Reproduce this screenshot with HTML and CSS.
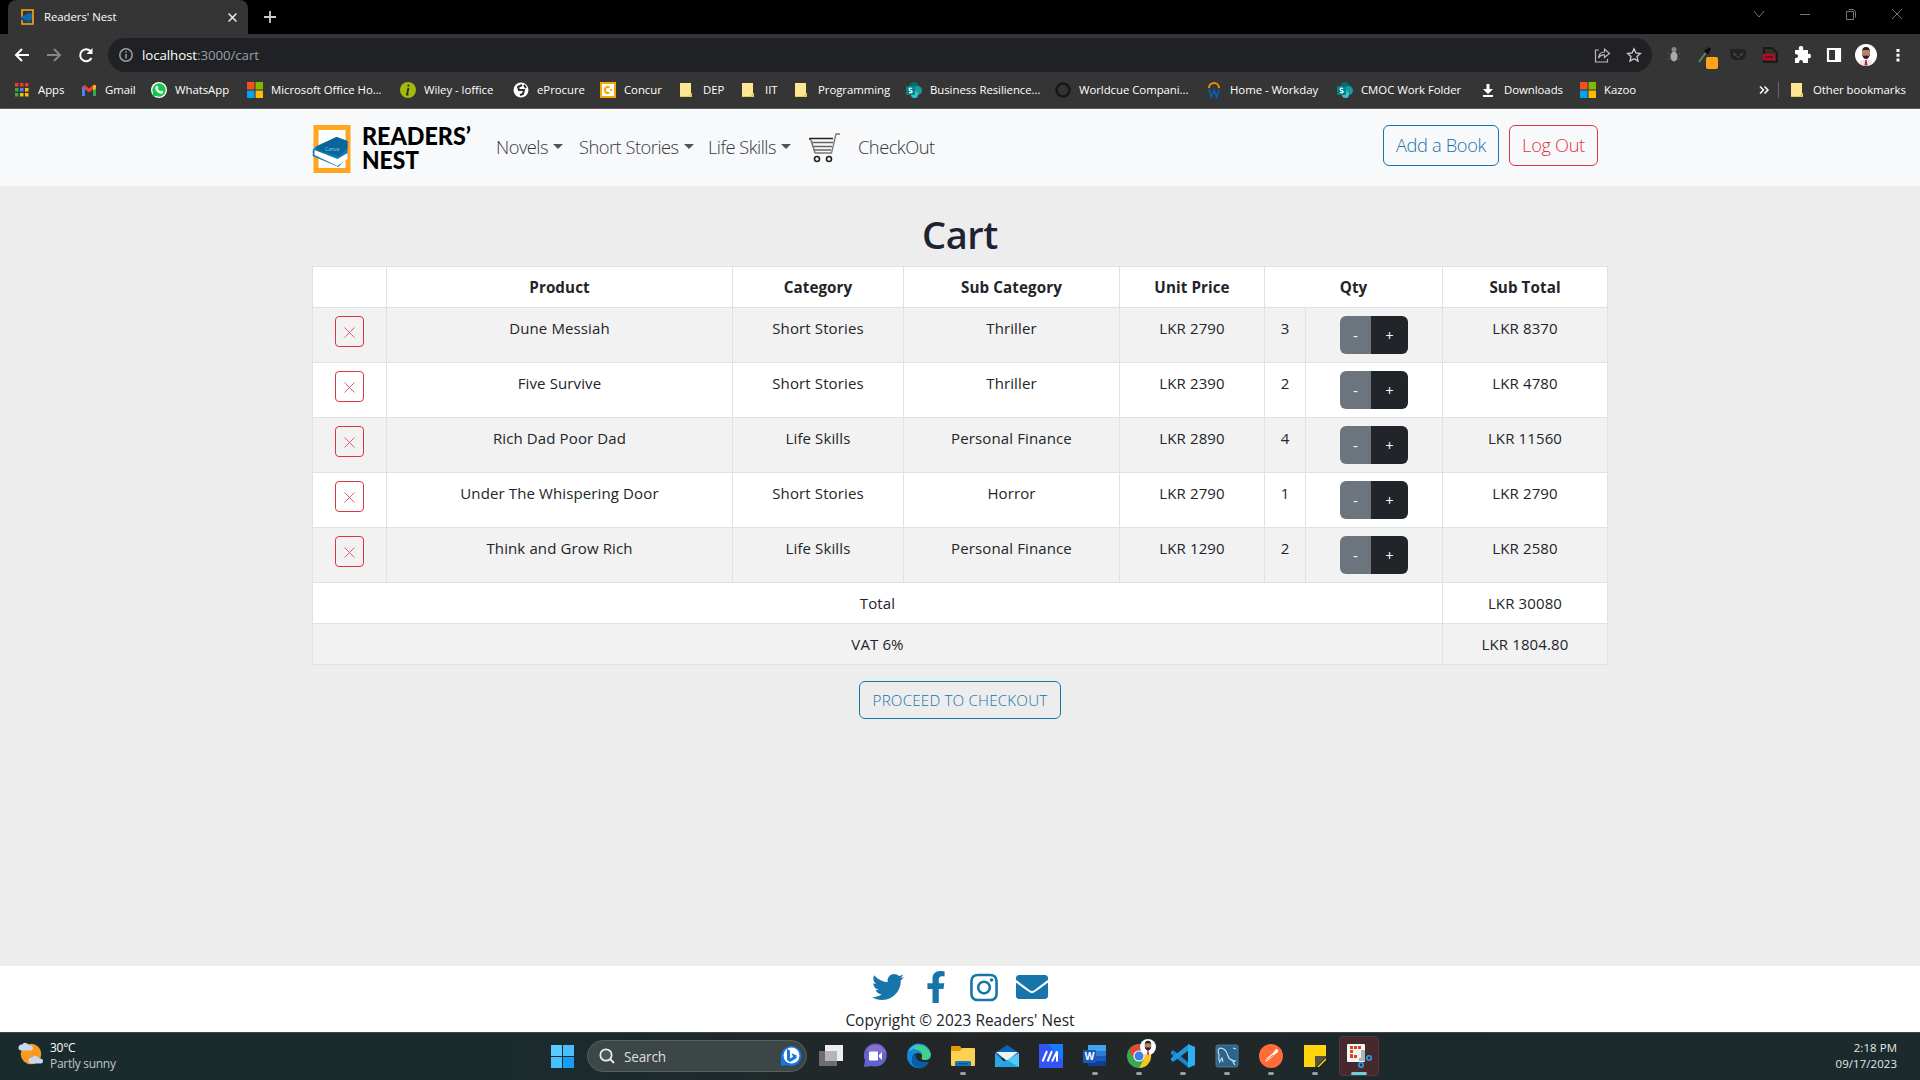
FILE: index.html
```html
<!DOCTYPE html>
<html lang="en">
<head>
<meta charset="utf-8">
<title>Readers' Nest</title>
<link rel="stylesheet" href="styles.css">
</head>
<body>
<svg class="defs" width="0" height="0">
  <defs>
    <symbol id="folder" viewBox="0 0 12 16"><path fill="#ffe694" d="M0 1h11v10h1v4H0z"/><path fill="#e8c95c" d="M0 14h9v-3h3v4H0z"/><path fill="#ffe694" d="M1 2h9v11H1z"/></symbol>
    <symbol id="ms" viewBox="0 0 15 15"><path fill="#f25022" d="M0 0h7v7H0z"/><path fill="#7fba00" d="M8 0h7v7H8z"/><path fill="#00a4ef" d="M0 8h7v7H0z"/><path fill="#ffb900" d="M8 8h7v7H8z"/></symbol>
    <symbol id="sp" viewBox="0 0 16 16"><circle cx="8" cy="5" r="5" fill="#036c70"/><circle cx="11.5" cy="8.500" r="4.500" fill="#1a9ba1"/><circle cx="8.500" cy="12.500" r="3.500" fill="#37c6d0"/><rect y="4" width="9" height="9" rx="1" fill="#038387"/><path d="M6.200 6.500q-3-1-3 .8 0 1 1.500 1.300t1.300 1.200q-.3 1.400-3 .6" fill="none" stroke="#fff" stroke-width="1.300"/></symbol>
    <symbol id="logo" viewBox="0 0 39 48"><path d="M3.500 2.500h32v43h-32z" fill="#fff" stroke="#ffa51f" stroke-width="5"/><path fill="#0c7cb8" d="M0 25l4-4 20-9 11 4v16l-9 10L0 31z"/><path fill="#fff" d="M2 25l23 9 10-6v6l-10 7-23-11z"/><path fill="#0a659b" d="M4 22l20-10 11 4v7l-9 8-22-6z"/></symbol>
    <symbol id="person" viewBox="0 0 22 22"><circle cx="11" cy="11" r="11" fill="#fff"/><path fill="#e9e4e6" d="M4 19q2-4 7-4t7 4q-7 5-14 0"/><path fill="#c61b3c" d="M10.300 16h1.400l.8 5.500h-3z"/><ellipse cx="11" cy="9" rx="4" ry="5.500" fill="#b98066"/><path fill="#28201f" d="M7 8q0-5 4-5t4 5l-1-2H8zM7 10q1 5 4 5t4-5l-1.500 2-2.500-.5-2.500.5z"/></symbol>
  </defs>
</svg>

<header class="browser">
  <div class="tabstrip">
    <div class="tab">
      <svg class="fav" viewBox="0 0 13 16"><path d="M1 1h11v14H1z" fill="none" stroke="#ffa51f" stroke-width="1.600"/><path fill="#0c6da8" d="M0 8l8-4 3 1v6l-3 3-8-3z"/><path d="M0 10l8 2.500 3-2" fill="none" stroke="#353535" stroke-width="1"/></svg>
      <span class="tab-title">Readers' Nest</span>
      <svg class="tab-x" viewBox="0 0 8 8"><path d="M.5.5l7 7M7.500.5l-7 7" stroke="#eee" stroke-width="1.300"/></svg>
    </div>
    <svg class="plus" viewBox="0 0 12 12"><path d="M6 0v12M0 6h12" stroke="#ccc" stroke-width="1.800"/></svg>
    <div class="controls">
      <svg viewBox="0 0 12 12"><path d="M1 3l5 6 5-6"/></svg>
      <svg viewBox="0 0 12 12"><path d="M1 6.500h10"/></svg>
      <svg viewBox="0 0 12 12"><path d="M1.500 3.500h7v8h-7zM3.500 1.500h5l2 2v6"/></svg>
      <svg viewBox="0 0 12 12"><path d="M1 1l10 10M11 1L1 11"/></svg>
    </div>
  </div>

  <div class="toolbar">
    <div class="navs">
      <svg viewBox="0 0 16 16"><path d="M15 8H2M8 2L2 8l6 6" stroke="#fff"/></svg>
      <svg viewBox="0 0 16 16"><path d="M1 8h13M8 2l6 6-6 6" stroke="#868686"/></svg>
      <svg viewBox="0 0 16 16"><path d="M13.500 11A6 6 0 1 1 12.500 4" stroke="#fff"/><path d="M14.500 1v6h-6z" fill="#fff"/></svg>
    </div>
    <div class="omnibox">
      <svg class="info" viewBox="0 0 14 14"><circle cx="7" cy="7" r="6.200" fill="none" stroke="#9aa0a6" stroke-width="1.500"/><path d="M7 6v4.500M7 3.300v1.500" stroke="#9aa0a6" stroke-width="1.500"/></svg>
      <span class="url">localhost<i>:3000/cart</i></span>
      <svg class="ob-icon" viewBox="0 0 16 16"><path d="M5 3H1.500v12h12v-3M4.500 11q.5-6 6-6V2l5 4.500-5 4V8q-4-.5-6 3z" fill="none" stroke="#bbb" stroke-width="1.200"/></svg>
      <svg class="ob-icon" viewBox="0 0 16 16"><path d="M8 1.800l1.900 4.200 4.500.5-3.400 3 1 4.600-4-2.400-4 2.400 1-4.600-3.400-3 4.500-.5z" fill="none" stroke="#ccc" stroke-width="1.300"/></svg>
    </div>
    <div class="exts">
      <svg viewBox="0 0 20 20"><ellipse cx="10" cy="11.500" rx="3.500" ry="5" fill="#aaa"/><circle cx="10" cy="4.500" r="2.500" fill="#888"/><path d="M4 8l3 2M16 8l-3 2M4 15l3-2M16 15l-3-2" stroke="#565656"/></svg>
      <svg viewBox="0 0 20 20"><path d="M3 17L11 6" stroke="#4b9b64" stroke-width="1.600"/><path d="M9 5l4 3M10 8l4-5" stroke="#0c0c0c" stroke-width="3"/><rect x="10" y="12" width="12" height="12" rx="2" fill="#ffa31a"/></svg>
      <svg viewBox="0 0 20 20"><path d="M2 6q0-2 2-2h12q2 0 2 2 0 9-5 9H7q-5 0-5-9" fill="#222"/><path d="M5 7l4 3-3 1zM15 7l-4 3 3 1z" fill="#4a4a4a"/><path d="M8 12h4" stroke="#4a4a4a"/></svg>
      <svg viewBox="0 0 20 20"><path d="M4 3h8l5 5v9H4z" fill="#353030" stroke="#241616" stroke-width="2"/><path fill="#b80c25" d="M3 9h12v6H3z"/><path d="M5 12h8" stroke="#4c1420" stroke-width="1.500"/></svg>
      <svg viewBox="0 0 20 20"><path fill="#fff" d="M3 5h4q-1-4 2-4t2 4h5v4q3-1 3 2t-3 2v5h-5q0-3-2-3t-2 3H3v-5q3 0 3-2t-3-2z"/></svg>
      <svg viewBox="0 0 20 20"><path d="M4 4h12v12H4z" fill="none" stroke="#fff" stroke-width="2.200"/><path fill="#fff" d="M11 3h6v14h-6z"/></svg>
      <svg class="me" viewBox="0 0 22 22"><use href="#person"/></svg>
      <svg viewBox="0 0 20 20"><path fill="#fff" d="M8.500 4h3v3h-3zM8.500 8.800h3v3h-3zM8.500 13.600h3v3h-3z"/></svg>
    </div>
  </div>

  <nav class="bookmarks">
    <a class="bm" style="width:67px"><svg viewBox="0 0 14 16"><path fill="#ee3b2f" d="M0 1h3.500v3.500H0zM5 1h3.500v3.500H5zM10 1h3.500v3.500H10z"/><path fill="#34a853" d="M0 6h3.500v3.500H0zM0 11h3.500v3.500H0z"/><path fill="#4285f4" d="M5 6h3.500v3.500H5z"/><path fill="#fbbc04" d="M10 6h3.500v3.500H10zM5 11h3.500v3.500H5zM10 11h3.500v3.500H10z"/></svg>Apps</a>
    <a class="bm" style="width:70px"><svg viewBox="0 0 16 16"><path fill="#4285f4" d="M1 4l3 2v8H1z"/><path fill="#34a853" d="M12 6l3-2v10h-3z"/><path d="M2.500 4L8 8.500 13.500 4" fill="none" stroke="#ea4335" stroke-width="3"/><path fill="#fbbc04" d="M12 3.500q3-2 3 1v2l-3 2z"/></svg>Gmail</a>
    <a class="bm" style="width:96px"><svg viewBox="0 0 16 16"><circle cx="8" cy="8" r="8" fill="#fff"/><path fill="#16c64d" d="M1.500 14.500L2 11a6.700 6.700 0 1 1 3 3z"/><path fill="#fff" d="M5 4l1.500-.3L7.500 6l-.8 1 2.500 2.300 1-.8 2.200 1q-.4 2.500-2.400 2.300Q5 10.500 4.200 6z"/></svg>WhatsApp</a>
    <a class="bm" style="width:153px"><svg viewBox="0 0 15 15"><use href="#ms"/></svg>Microsoft Office Ho...</a>
    <a class="bm" style="width:113px"><svg viewBox="0 0 16 16"><circle cx="8" cy="8" r="8" fill="#a3b90b"/><path d="M8.500 2.500v2M8.500 6L7 12.500h1.500" stroke="#263014" stroke-width="1.800" fill="none"/></svg>Wiley - loffice</a>
    <a class="bm" style="width:87px"><svg viewBox="0 0 16 16"><circle cx="8" cy="8" r="7.500" fill="#fff"/><path d="M9 3L5 5l1 3h5l-1 4-3 1M11 3l2 3" fill="none" stroke="#2b3034" stroke-width="2"/></svg>eProcure</a>
    <a class="bm" style="width:80px"><svg viewBox="0 0 16 16"><path fill="#fff" stroke="#f5a800" stroke-width="2" d="M1 1h14v14H1z"/><path d="M9.500 5.500a3 3 0 1 0 0 5" fill="none" stroke="#f5a800" stroke-width="2"/><path fill="#f5a800" d="M10 7h2v2h-2z"/></svg>Concur</a>
    <a class="bm f" style="width:62px"><svg viewBox="0 0 12 16"><use href="#folder"/></svg>DEP</a>
    <a class="bm f" style="width:53px"><svg viewBox="0 0 12 16"><use href="#folder"/></svg>IIT</a>
    <a class="bm f" style="width:111px"><svg viewBox="0 0 12 16"><use href="#folder"/></svg>Programming</a>
    <a class="bm" style="width:149px"><svg viewBox="0 0 16 16"><use href="#sp"/></svg>Business Resilience...</a>
    <a class="bm" style="width:151px"><svg viewBox="0 0 16 16"><circle cx="8" cy="8" r="6.500" fill="#333" stroke="#171717" stroke-width="2.500"/></svg>Worldcue Compani...</a>
    <a class="bm" style="width:131px"><svg viewBox="0 0 16 16"><path d="M3 6a5 5 0 0 1 10 0" fill="none" stroke="#f38b00" stroke-width="2"/><path d="M3 7l2.200 8L8 8.500l2.800 6.500L13 7" fill="none" stroke="#0b5cad" stroke-width="1.800"/></svg>Home - Workday</a>
    <a class="bm" style="width:143px"><svg viewBox="0 0 16 16"><use href="#sp"/></svg>CMOC Work Folder</a>
    <a class="bm" style="width:100px"><svg viewBox="0 0 16 16"><path fill="#fff" d="M6.500 2h3v5H13l-5 5-5-5h3.500zM3 13h10v2H3z"/></svg>Downloads</a>
    <a class="bm" style="width:60px"><svg viewBox="0 0 15 15"><use href="#ms"/></svg>Kazoo</a>
    <span class="more"><svg viewBox="0 0 10 8"><path d="M1 .5L4.500 4 1 7.500M5.500.5L9 4 5.500 7.500" fill="none" stroke="#fff" stroke-width="1.500"/></svg></span>
    <a class="bm f other"><svg viewBox="0 0 12 16"><use href="#folder"/></svg>Other bookmarks</a>
  </nav>
</header>

<section class="page">
  <nav class="navbar">
    <a class="brand">
      <svg width="160" height="48" viewBox="0 0 160 48"><svg width="40" height="48" viewBox="0 0 39 48"><use href="#logo"/></svg>
        <text class="canva" x="13" y="26">Canva</text>
        <text class="wordmark" x="50" y="20" textLength="109" lengthAdjust="spacingAndGlyphs">READERS’</text>
        <text class="wordmark" x="50" y="44" textLength="57" lengthAdjust="spacingAndGlyphs">NEST</text></svg>
    </a>
    <a class="link dd" style="width:83px">Novels</a>
    <a class="link dd" style="width:129px">Short Stories</a>
    <a class="link dd" style="width:100px">Life Skills</a>
    <svg class="cart" viewBox="0 0 32 30"><g fill="none" stroke="#222" stroke-width="1.600"><path d="M1 7V5.500h23"/><path d="M31 1h-4L22.500 20H6" stroke="#777" stroke-width="1.300"/><path d="M3 9.500h21M4 13.500h19M5 17h17" stroke="#666"/><path d="M2 7l4 13" stroke="#777"/><circle cx="8" cy="26" r="2.500"/><circle cx="20" cy="26" r="2.500"/></g></svg>
    <a class="link co">CheckOut</a>
    <div class="actions">
      <button class="btn add">Add a Book</button>
      <button class="btn out">Log Out</button>
    </div>
  </nav>

  <main>
    <h1>Cart</h1>
    <table>
      <colgroup><col class="c1"><col class="c2"><col class="c3"><col class="c4"><col class="c5"><col class="c6"><col class="c7"><col class="c8"></colgroup>
      <thead><tr><th></th><th>Product</th><th>Category</th><th>Sub Category</th><th>Unit Price</th><th colspan="2">Qty</th><th>Sub Total</th></tr></thead>
      <tbody>
        <tr class="item"><td><button class="del"><svg viewBox="0 0 11 11"><path d="M.5.5l10 10M10.500.5l-10 10"/></svg></button></td><td>Dune Messiah</td><td>Short Stories</td><td>Thriller</td><td>LKR 2790</td><td>3</td><td><div class="qty"><button>-</button><button>+</button></div></td><td>LKR 8370</td></tr>
        <tr class="item"><td><button class="del"><svg viewBox="0 0 11 11"><path d="M.5.5l10 10M10.500.5l-10 10"/></svg></button></td><td>Five Survive</td><td>Short Stories</td><td>Thriller</td><td>LKR 2390</td><td>2</td><td><div class="qty"><button>-</button><button>+</button></div></td><td>LKR 4780</td></tr>
        <tr class="item"><td><button class="del"><svg viewBox="0 0 11 11"><path d="M.5.5l10 10M10.500.5l-10 10"/></svg></button></td><td>Rich Dad Poor Dad</td><td>Life Skills</td><td>Personal Finance</td><td>LKR 2890</td><td>4</td><td><div class="qty"><button>-</button><button>+</button></div></td><td>LKR 11560</td></tr>
        <tr class="item"><td><button class="del"><svg viewBox="0 0 11 11"><path d="M.5.5l10 10M10.500.5l-10 10"/></svg></button></td><td>Under The Whispering Door</td><td>Short Stories</td><td>Horror</td><td>LKR 2790</td><td>1</td><td><div class="qty"><button>-</button><button>+</button></div></td><td>LKR 2790</td></tr>
        <tr class="item"><td><button class="del"><svg viewBox="0 0 11 11"><path d="M.5.5l10 10M10.500.5l-10 10"/></svg></button></td><td>Think and Grow Rich</td><td>Life Skills</td><td>Personal Finance</td><td>LKR 1290</td><td>2</td><td><div class="qty"><button>-</button><button>+</button></div></td><td>LKR 2580</td></tr>
        <tr><td colspan="7">Total</td><td>LKR 30080</td></tr>
        <tr><td colspan="7">VAT 6%</td><td>LKR 1804.80</td></tr>
      </tbody>
    </table>
    <button class="proceed">PROCEED TO CHECKOUT</button>
  </main>

  <footer>
    <div class="social">
      <svg viewBox="0 0 512 512"><path d="M459.370 151.716c.325 4.548.325 9.097.325 13.645 0 138.720-105.583 298.558-298.558 298.558-59.452 0-114.680-17.219-161.137-47.106 8.447.974 16.568 1.299 25.340 1.299 49.055 0 94.213-16.568 130.274-44.832-46.132-.975-84.792-31.188-98.112-72.772 6.498.974 12.995 1.624 19.818 1.624 9.421 0 18.843-1.300 27.614-3.573-48.081-9.747-84.143-51.980-84.143-102.985v-1.299c13.969 7.797 30.214 12.670 47.431 13.319-28.264-18.843-46.781-51.005-46.781-87.391 0-19.492 5.197-37.360 14.294-52.954 51.655 63.675 129.300 105.258 216.365 109.807-1.624-7.797-2.599-15.918-2.599-24.040 0-57.828 46.782-104.934 104.934-104.934 30.213 0 57.502 12.670 76.670 33.137 23.715-4.548 46.456-13.320 66.599-25.340-7.798 24.366-24.366 44.833-46.132 57.827 21.117-2.273 41.584-8.122 60.426-16.243-14.292 20.791-32.161 39.308-52.628 54.253z"/></svg>
      <svg viewBox="0 0 320 512"><path d="M279.140 288l14.220-92.660h-88.910v-60.130c0-25.350 12.420-50.060 52.240-50.060h40.420V6.260S260.430 0 225.360 0c-73.220 0-121.080 44.380-121.080 124.720v70.620H22.890V288h81.390v224h100.170V288z"/></svg>
      <svg viewBox="32 32 448 448"><path fill-rule="evenodd" d="M165 42h182q123 0 123 123v182q0 123-123 123H165Q42 470 42 347V165Q42 42 165 42zm0 40q-83 0-83 83v182q0 83 83 83h182q83 0 83-83V165q0-83-83-83zM256 146a110 110 0 1 1 0 220 110 110 0 0 1 0-220zm0 40a70 70 0 1 0 0 140 70 70 0 0 0 0-140z"/><circle cx="373" cy="139" r="27"/></svg>
      <svg viewBox="0 0 512 512"><path d="M502.300 190.800c3.900-3.100 9.700-.2 9.700 4.700V400c0 26.500-21.500 48-48 48H48c-26.500 0-48-21.500-48-48V195.600c0-5 5.700-7.800 9.700-4.700 22.400 17.400 52.100 39.500 154.100 113.600 21.100 15.400 56.700 47.800 92.200 47.600 35.700.3 72-32.800 92.300-47.600 102-74.100 131.600-96.300 154-113.700zM256 320c23.200.4 56.600-29.200 73.400-41.400 132.700-96.300 142.800-104.700 173.400-128.700 5.800-4.500 9.200-11.500 9.200-18.900v-19c0-26.500-21.500-48-48-48H48c-26.500 0-48 21.500-48 48v19c0 7.400 3.400 14.300 9.200 18.900 30.600 23.900 40.700 32.400 173.400 128.700 16.800 12.200 50.200 41.800 73.400 41.400z"/></svg>
    </div>
    <p>Copyright © 2023 Readers' Nest</p>
  </footer>
</section>

<div class="taskbar">
  <div class="weather">
    <svg viewBox="0 0 24 24"><circle cx="12" cy="12" r="10.300" fill="#f99a22"/><path fill="#c9d8f6" d="M2 8.500a3 3 0 0 1 1-6 4 4 0 0 1 7 1q4-.5 4 2.500t-3 2.500z"/><path fill="#c9d8f6" d="M12 21.500a3 3 0 0 1 1-6 4 4 0 0 1 7 1q4-.5 4 2.500t-3 2.500z"/></svg>
    <div><b>30°C</b><span>Partly sunny</span></div>
  </div>
  <div class="dock">
    <svg class="win" viewBox="0 0 23 23"><path fill="#5dcaff" d="M0 0h11v11H0z"/><path fill="#47c0fb" d="M12 0h11v11H12zM0 12h11v11H0z"/><path fill="#169ff7" d="M12 12h11v11H12z"/></svg>
    <div class="search">
      <svg viewBox="0 0 16 16"><circle cx="7" cy="7" r="5.700" fill="#4e5757" stroke="#eee" stroke-width="1.700"/><path d="M11 11l4 4" stroke="#eee" stroke-width="1.800"/></svg>
      <span>Search</span>
      <svg class="bing" viewBox="0 0 20 20"><path fill="#1676e3" d="M10 0a10 10 0 1 1-4 19L0 20V10A10 10 0 0 1 10 0"/><circle cx="10.500" cy="9.500" r="8" fill="#fff"/><path fill="#1676e3" d="M6 3l3 1.500v8l3-1.700-1.500-3.500 5 2v3L9 16l-3-2z"/></svg>
    </div>
    <div class="apps">
      <span><svg viewBox="0 0 24 24"><path fill="#eee" d="M6 1h18v16H6z"/><path fill="#777" d="M0 7h18v15H0z" opacity=".88"/><path fill="#b5b5b5" d="M6 7h12v10H6z"/></svg></span>
      <span><svg viewBox="0 0 24 24"><path fill="#6462ce" d="M1 23l1-7A11.500 11.500 0 1 1 9 22z"/><path fill="#9575cf" d="M3 7q3-6 9-6 8 0 11 8z" opacity=".7"/><rect x="6" y="7.500" width="9" height="9" rx="1" fill="#fff"/><path fill="#fff" d="M16 11l3-3v8l-3-3z"/></svg></span>
      <span><svg viewBox="0 0 24 24"><path fill="#1388d9" d="M0 12A12 12 0 0 1 24 11q0 5-5 5-5 0-4-3 1-3-3-4-6 0-7 5 0 8 9 10A12 12 0 0 1 0 12"/><path fill="#42d18b" d="M7 2q12-4 17 8-1 6-6 6-5 0-3-3Q17 7 7 5z"/><path fill="#35bfe1" d="M1 8Q5 0 13 0 6 5 1 8"/><path fill="#075fa9" d="M9 10q-2 9 13 8-4 7-10 6-9-2-7-10 1-3 4-4"/></svg></span>
      <span><svg viewBox="0 0 24 24"><path fill="#e29d06" d="M0 3q0-1 1-1h8l2 3v5H0z"/><path fill="#ffd052" d="M0 7h9l2-3h12q1 0 1 1v16q0 1-1 1H1q-1 0-1-1z"/><path fill="#1279c4" d="M4 22v-4q0-1 2-1h12q2 0 2 1v4z"/><path fill="#075385" d="M7 19h10v1.300H7z"/></svg><i></i></span>
      <span><svg viewBox="0 0 24 24"><path fill="#0d62bb" d="M0 9l12-8 12 8v5H0z"/><path fill="#eef2f5" d="M1 8h22l-11 9z"/><path fill="#2ba7e8" d="M0 9l15 14H0z"/><path fill="#51caf7" d="M24 9v14H0z"/><path fill="#22a5e8" d="M12 16l12 7H0z"/></svg></span>
      <span><svg viewBox="0 0 24 24"><path fill="#3155f5" d="M0 0h24v24H0z"/><path fill="#147df9" d="M9 0h15v17z"/><path d="M3.500 17.500L8 7M8.500 17.500L13 7M13 17.500l5-10v10" fill="none" stroke="#fff" stroke-width="2"/></svg></span>
      <span><svg viewBox="0 0 24 24"><path fill="#41a5ee" d="M5 1h18v6H5z"/><path fill="#2b7cd3" d="M5 7h18v5H5z"/><path fill="#185abd" d="M5 12h18v5H5z"/><path fill="#103f91" d="M5 17h18v5H5z"/><rect y="6" width="13" height="13" rx="1" fill="#185abd"/><text x="6.500" y="16" class="word-w">W</text></svg><i></i></span>
      <span><svg class="wide" viewBox="0 0 30 30"><circle cx="12" cy="18" r="12" fill="#37a952"/><path fill="#e84637" d="M2 12a12 12 0 0 1 20.500 0H12l-5 9z"/><path fill="#fbc421" d="M22.500 12A12 12 0 0 1 12 30l5-9-1-9z"/><circle cx="12" cy="18" r="5.600" fill="#fff"/><circle cx="12" cy="18" r="4.500" fill="#3c80e8"/><g transform="translate(13 1) scale(.727)"><circle cx="11" cy="11" r="11" fill="#fff"/><path fill="#c61b3c" d="M10.300 16h1.400l.8 5.500h-3z"/><ellipse cx="11" cy="9" rx="4.500" ry="6" fill="#b98066"/><path fill="#28201f" d="M6.500 8q0-5.500 4.500-5.500t4.500 5.500l-1.500-2H8zM6.500 10q1 6 4.500 6t4.500-6l-2 2-2.500-.5-2.500.5z"/></g></svg><i></i></span>
      <span><svg viewBox="0 0 24 24"><path fill="#1688d3" d="M0 8l2-2 16 13v5L0 10z"/><path fill="#2096df" d="M0 16l2 2L18 6V0L0 14z"/><path fill="#2cb0f3" d="M17 0l7 3v18l-7 3z"/></svg><i></i></span>
      <span><svg viewBox="0 0 24 24"><rect x="1" y="1" width="22" height="22" rx="2" fill="#2b658b" stroke="#477b99"/><path d="M5 19q-2-4-1-8-2-6 1-7 6 0 8 8 1 4 7 5l-2 1 2 3M18 4l3 1M5 17l2-3 1 4" fill="none" stroke="#d8e4ec" stroke-width="1.100"/></svg><i></i></span>
      <span><svg viewBox="0 0 24 24"><circle cx="12" cy="12" r="12" fill="#ff6c37"/><path d="M6 18l2-4 6-5 3-4q3 0 2 3l-4 3-5 5z" fill="#fff"/><path d="M8 16l6-5" stroke="#ff6c37"/></svg><i></i></span>
      <span><svg viewBox="0 0 24 24"><path fill="#ffd60a" d="M1 1h22v22H1z"/><path fill="#555344" d="M12 12h11L12 23z"/><path fill="#252a2c" d="M23 12v11H12z"/><path fill="#ffd60a" d="M14 23l9-9v9z"/><path fill="#1f2628" d="M15 24l9-9v9z"/></svg><i></i></span>
      <span class="on"><svg viewBox="0 0 24 24"><rect width="18" height="18" rx="1" fill="#f3f5f7"/><path fill="#d84719" d="M3 2h3v3H3zM7 2h3v3H7zM11 2h3v3h-3zM3 6h3v3H3zM3 10h3v4H3zM7 11h3v3H7z"/><path fill="#aeb5ba" d="M14 6h4v11h-6v-3h2z"/><circle cx="14" cy="21" r="2.200" fill="none" stroke="#25a5e5" stroke-width="1.600"/><circle cx="22" cy="14" r="2.200" fill="none" stroke="#25a5e5" stroke-width="1.600"/></svg><i></i></span>
    </div>
  </div>
  <div class="clock"><span>2:18 PM</span><span>09/17/2023</span></div>
</div>
</body>
</html>
```
FILE: styles.css
```css
* { box-sizing: border-box; }
body {
  margin: 0; width: 1920px; height: 1080px; overflow: hidden;
  display: flex; flex-direction: column;
  font-family: "Open Sans", "Noto Sans", sans-serif; color: #212529;
}
svg { display: block; flex: none; overflow: visible; }
button { font-family: inherit; background: none; border: 0; margin: 0; padding: 0; }
.defs { display: none; }

/* browser window */
.browser { height: 109px; background: #353535; border-bottom: 1px solid #606060; color: #fff; flex: none; font-size: 11.4px; letter-spacing: -.05px; }
.tabstrip { height: 34px; background: #000; display: flex; align-items: center; padding-left: 8px; }
.tab { width: 240px; height: 34px; background: #353535; border-radius: 8px 8px 0 0; display: flex; align-items: center; padding: 0 11px 0 13px; }
.fav { width: 13px; height: 16px; }
.tab-title { margin-left: 10px; flex: 1; padding-bottom: 2px; }
.tab-x { width: 9px; height: 9px; }
.plus { width: 12px; height: 12px; margin-left: 16px; }
.controls { margin-left: auto; display: flex; gap: 34px; padding: 0 17px 6px 0; }
.controls svg { width: 12px; height: 12px; fill: none; stroke: #777; stroke-width: 1; }
.toolbar { height: 40px; display: flex; align-items: center; padding-top: 2px; }
.navs { width: 108px; display: flex; gap: 16px; padding-left: 14px; }
.navs svg { width: 16px; height: 16px; fill: none; stroke-width: 2; }
.omnibox { width: 1544px; height: 34px; border-radius: 17px; background: #202124; display: flex; align-items: center; padding: 0 10px 0 11px; }
.info { width: 14px; height: 14px; }
.url { flex: 1; margin-left: 9px; font-size: 13.3px; letter-spacing: -.08px; }
.url i { font-style: normal; color: #9aa0a6; }
.ob-icon { width: 16px; height: 16px; margin-left: 16px; }
.exts { display: flex; gap: 12px; margin-left: 12px; align-items: center; }
.exts svg { width: 20px; height: 20px; }
.exts svg.me { width: 22px; height: 22px; margin: 0 -1px; }
.bookmarks { height: 34px; display: flex; align-items: center; padding: 0 13px 3px 14px; }
.bm { display: flex; align-items: center; white-space: nowrap; flex: none; gap: 8px; }
.bm svg { width: 16px; height: 16px; }
.bm.f { gap: 11px; }
.bm.f svg { width: 12px; }
.more { margin-left: auto; width: 20px; height: 16px; border-right: 1px solid #666; display: flex; align-items: center; margin-right: 12px; }
.more svg { width: 10px; height: 8px; }
.bm.other { width: 116px; gap: 10px; }

/* page */
.page { flex: 1; background: #ededed; display: flex; flex-direction: column; min-height: 0; }
.navbar { height: 77px; background: #f8f9fa; padding: 0 322px 0 312px; display: flex; align-items: center; flex: none; }
.brand { width: 184px; padding-top: 3px; }
.wordmark { font-family: Lato, sans-serif; font-weight: 900; font-size: 24px; fill: #000; }
.canva { font-size: 5px; fill: #9cc7dd; }
.link { font-size: 18.3px; font-weight: 300; color: #33383d; display: flex; align-items: center; white-space: nowrap; letter-spacing: -.5px; padding-bottom: 3px; }
.dd::after { content: ""; margin-left: 5px; border: 5px solid transparent; border-top-color: #50545a; border-bottom: 0; }
.cart { width: 32px; height: 30px; margin-left: 1px; margin-right: 17px; }
.actions { margin-left: auto; display: flex; gap: 10px; padding-bottom: 4px; }
.btn { height: 41px; border: 1px solid; border-radius: 6px; font-size: 18.3px; font-weight: 300; padding-bottom: 2px; letter-spacing: -.35px; }
.add { width: 116px; color: #1775aa; }
.out { width: 89px; color: #dc3545; }

main { flex: 1; padding: 24px 312px 0; display: flex; flex-direction: column; align-items: center; }
h1 { margin: 0; font-size: 38px; line-height: 48px; height: 56px; font-weight: 600; letter-spacing: -.4px; color: #1f2230; }
table { table-layout: fixed; width: 1296px; border-collapse: collapse; font-size: 15px; letter-spacing: .12px; text-align: center; }
.c1 { width: 74px; } .c2 { width: 346px; } .c3 { width: 171px; } .c4 { width: 216px; }
.c5 { width: 145px; } .c6 { width: 41px; } .c7 { width: 137px; } .c8 { width: 165px; }
th, td { border: 1px solid #dee2e6; padding: 8px 0; height: 41px; line-height: 24px; vertical-align: top; background: #fff; }
th { font-weight: 700; font-size: 15.2px; letter-spacing: .08px; }
tbody tr:nth-child(odd) td { background: #f2f2f2; }
.item td { height: 55px; }
.del { width: 29px; height: 31px; border: 1px solid #dc3545; border-radius: 4px; display: flex; align-items: center; justify-content: center; margin: 0 auto; }
.del svg { width: 11px; height: 11px; fill: none; stroke: #dc4f5c; stroke-width: .9; margin-top: 1px; }
.qty { display: flex; width: 68px; height: 38px; margin: 0 auto; border-radius: 6px; overflow: hidden; }
.qty button { width: 31px; background: #6c757d; color: #fff; font-size: 14px; padding-top: 1px; }
.qty button + button { width: 37px; background: #212529; }
.proceed { width: 202px; height: 38px; margin-top: 16px; border: 1px solid #1775aa; border-radius: 6px; color: #1775aa; font-size: 15.2px; font-weight: 300; letter-spacing: .18px; }

footer { height: 66px; background: #fff; flex: none; display: flex; flex-direction: column; align-items: center; }
.social { height: 43px; display: flex; align-items: center; gap: 16px; padding-bottom: 1px; }
.social svg { width: 32px; height: 32px; fill: #1775aa; }
.social svg:nth-child(3) { height: 29px; }
footer p { margin: 0; font-size: 15.4px; line-height: 24px; height: 23px; letter-spacing: .03px; white-space: nowrap; }

/* taskbar */
.taskbar { height: 48px; flex: none; border-top: 1px solid #3b4648; background: linear-gradient(90deg, #1a2b2e 0 27%, #242627 50%, #222728 60%, #1a2a2d 78%); display: flex; color: #fff; font-size: 12px; }
.weather { width: 551px; display: flex; padding: 0 0 2px 19px; align-items: center; gap: 7px; }
.weather svg { width: 24px; height: 24px; margin-top: -3px; }
.weather div { display: flex; flex-direction: column; line-height: 16px; letter-spacing: -.28px; }
.weather b { font-weight: 400; }
.weather span { color: #c0c7c9; }
.dock { display: flex; align-items: center; padding-bottom: 1px; }
.win { width: 23px; height: 23px; margin-right: 13px; }
.search { width: 220px; height: 32px; border: 1px solid #566061; border-radius: 16px; background: #3c4647; display: flex; align-items: center; padding: 0 5px 0 11px; font-size: 13.6px; color: #ddd; letter-spacing: -.2px; }
.search svg { width: 16px; height: 16px; margin-right: 9px; }
.search span { flex: 1; }
.search svg.bing { width: 20px; height: 20px; margin: 0; }
.apps { display: flex; margin-left: 4px; gap: 4px; }
.apps span { width: 40px; height: 40px; border-radius: 4px; display: flex; align-items: center; justify-content: center; position: relative; }
.apps svg { width: 24px; height: 24px; }
.apps svg.wide { width: 30px; height: 30px; margin: -6px -6px 0 0; }
.apps i { position: absolute; bottom: 1px; left: 17px; width: 6px; height: 3px; border-radius: 2px; background: #9a9fa0; }
.apps .on { background: #45292c; border: 1px solid #54393b; }
.apps .on i { left: 11px; width: 16px; bottom: 0; background: #6ccfdb; }
.word-w { font-size: 10px; font-weight: 700; fill: #fff; text-anchor: middle; }
.clock { margin-left: auto; padding: 0 23px 2px 0; display: flex; flex-direction: column; justify-content: center; line-height: 16px; font-size: 11.4px; letter-spacing: .1px; text-align: right; color: #e8e8e8; }
```
